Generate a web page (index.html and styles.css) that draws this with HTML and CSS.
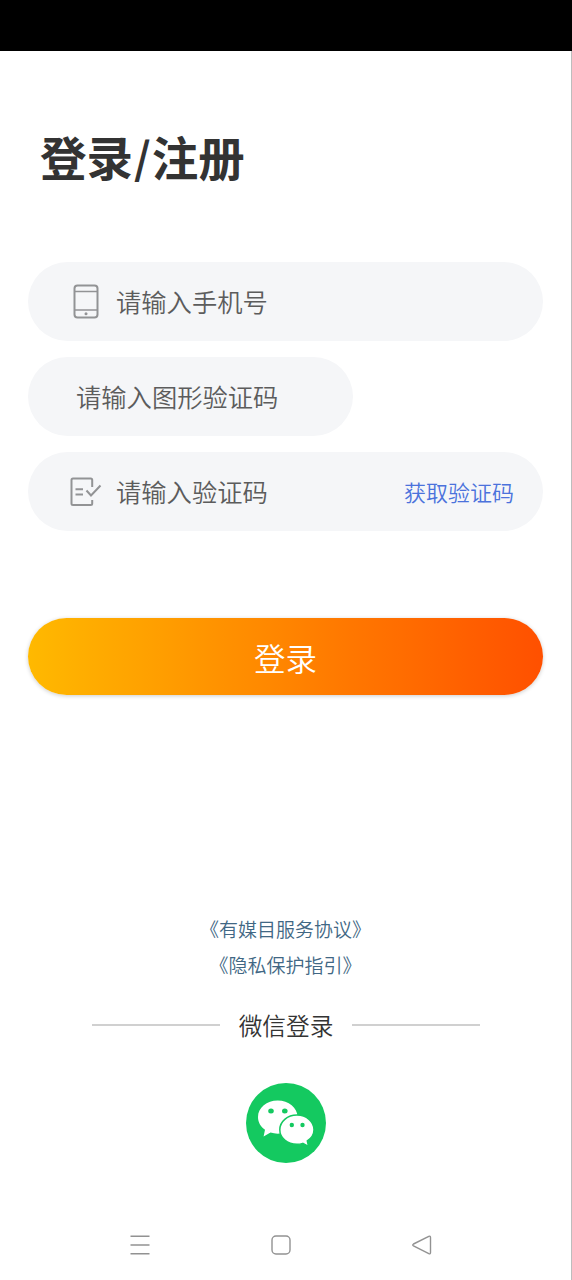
FILE: index.html
```html
<!DOCTYPE html>
<html lang="zh-CN">
<head>
<meta charset="utf-8">
<title>登录/注册</title>
<link rel="stylesheet" href="styles.css">
</head>
<body>
<div class="status-bar"></div>
<main class="screen">
  <h1 class="title">登录<span class="slash">/</span>注册</h1>
  <form class="form">
    <label class="field">
      <svg class="field-icon" viewBox="0 0 34 40" fill="none" stroke="#929395" stroke-width="2">
        <rect x="5.500" y="3.500" width="23" height="32" rx="3"/>
        <path d="M5.500 9.500H28.500M5.500 28H28.500" stroke-width="1.700"/>
        <circle cx="17" cy="31.800" r="1.500" fill="#929395" stroke="none"/>
      </svg>
      <span class="placeholder">请输入手机号</span>
    </label>
    <label class="field field-short">
      <span class="placeholder">请输入图形验证码</span>
    </label>
    <label class="field">
      <svg class="field-icon" viewBox="0 0 34 40" fill="none" stroke="#929395" stroke-width="2">
        <path d="M23.200 15V8Q23.200 6.500 21.700 6.500H4Q2.500 6.500 2.500 8V31.500Q2.500 33 4 33H21.700Q23.200 33 23.200 31.500V28"/>
        <path d="M6.500 17.300H14M6.500 22.500H14M17.500 18.500L22 23.500L31.500 13.500"/>
      </svg>
      <span class="placeholder">请输入验证码</span>
      <span class="get-code">获取验证码</span>
    </label>
    <button class="submit" type="button">登录</button>
  </form>
  <div class="agreements">
    <a class="agreement">《有媒目服务协议》</a>
    <a class="agreement">《隐私保护指引》</a>
  </div>
  <div class="divider"><span class="divider-text">微信登录</span></div>
  <svg class="wechat" viewBox="0 0 80 80">
    <circle cx="40" cy="40" r="40" fill="#14c960"/>
    <path d="M31.700 17.500C20.800 17.500 12 24.700 12 34C12 39.200 14.600 43.800 19 46.800L17.600 53.500L24.500 49.600C26.800 50.300 29.200 50.700 31.700 50.700C42.600 50.700 51.500 43.300 51.500 34C51.500 24.700 42.600 17.500 31.700 17.500Z" fill="#fff"/>
    <path d="M51 32C41.300 32 33.800 38.600 33.800 46.700C33.800 55 41.300 61.300 51 61.300C53 61.300 55 61 56.800 60.400L62.500 63.300L61.300 57.800C65.500 55.200 68 51.200 68 46.700C68 38.600 60.500 32 51 32Z" fill="#fff" stroke="#14c960" stroke-width="1.500"/>
    <ellipse cx="25" cy="28" rx="2.800" ry="2.500" fill="#14c960"/>
    <ellipse cx="38.800" cy="28" rx="2.800" ry="2.500" fill="#14c960"/>
    <circle cx="45.800" cy="42" r="2.200" fill="#14c960"/>
    <circle cx="56.500" cy="42" r="2.200" fill="#14c960"/>
  </svg>
  <nav class="nav-bar">
    <svg class="nav-icon" viewBox="0 0 24 24"><path d="M2.500 3.200H21.500M2.500 12H21.500M2.500 20.700H21.500"/></svg>
    <svg class="nav-icon" viewBox="0 0 24 24"><rect x="3" y="3" width="18" height="18" rx="4"/></svg>
    <svg class="nav-icon" viewBox="0 0 24 24"><path d="M3.500 11L18.800 3.300Q20.500 2.600 20.500 4.500V19.500Q20.500 21.400 18.800 20.700L3.500 13Q2 12 3.500 11Z"/></svg>
  </nav>
</main>
</body>
</html>
```
FILE: styles.css
```css
* {
  box-sizing: border-box;
}

body {
  margin: 0;
  height: 1280px;
  display: flex;
  flex-direction: column;
  background: #fff;
  font-family: "Noto Sans CJK SC", sans-serif;
}

.status-bar {
  height: 51px;
  background: #000;
}

.screen {
  flex: 1;
  display: flex;
  flex-direction: column;
  border-right: 1px solid #bdbdbd;
}

.title {
  height: 68px;
  margin: 71px 0 0 40px;
  font-size: 46.500px;
  line-height: 68px;
  font-weight: 700;
  color: #333;
}

.slash {
  margin: 0 1px;
  font-size: 43px;
  line-height: 1;
  vertical-align: 2px;
}

.form {
  display: flex;
  flex-direction: column;
  gap: 16px;
  margin: 72px 28px 0;
}

.field {
  display: flex;
  align-items: center;
  height: 79px;
  padding: 0 29px 0 41px;
  border-radius: 40px;
  background: #f5f6f8;
}

.field-short {
  width: 325px;
  padding-left: 48px;
}

.field-icon {
  width: 34px;
  height: 40px;
  margin-right: 13px;
}

.placeholder {
  font-size: 25.300px;
  font-weight: 350;
  line-height: 38px;
  padding-bottom: 2px;
  color: #5c5c5c;
}

.get-code {
  margin-left: auto;
  padding-bottom: 2px;
  font-size: 22px;
  font-weight: 350;
  color: #4b72dc;
}

.submit {
  height: 77px;
  margin-top: 71px;
  padding: 0;
  border: 0;
  border-radius: 39px;
  background: linear-gradient(90deg, #ffb900, #ff5000);
  box-shadow: 0 1px 4px rgba(0, 0, 0, .2);
  color: #fff;
  font-family: inherit;
  font-size: 31.500px;
  font-weight: 350;
}

.agreements {
  display: flex;
  flex-direction: column;
  align-items: center;
  margin-top: 216px;
}

.agreement {
  font-size: 19px;
  font-weight: 350;
  line-height: 36px;
  color: #416784;
}

.divider {
  display: flex;
  align-items: center;
  gap: 19px;
  height: 36px;
  margin: 24px 91px 0 92px;
}

.divider::before,
.divider::after {
  content: "";
  flex: 1;
  height: 2px;
  background: #d0d0d0;
}

.divider-text {
  font-size: 23.700px;
  font-weight: 350;
  line-height: 36px;
  color: #333;
}

.wechat {
  width: 80px;
  height: 80px;
  margin: 40px auto 0;
}

.nav-bar {
  display: flex;
  justify-content: space-between;
  margin: 70px 137px 0 128px;
}

.nav-icon {
  width: 24px;
  height: 24px;
  fill: none;
  stroke: #929292;
  stroke-width: 1.400;
}
```
